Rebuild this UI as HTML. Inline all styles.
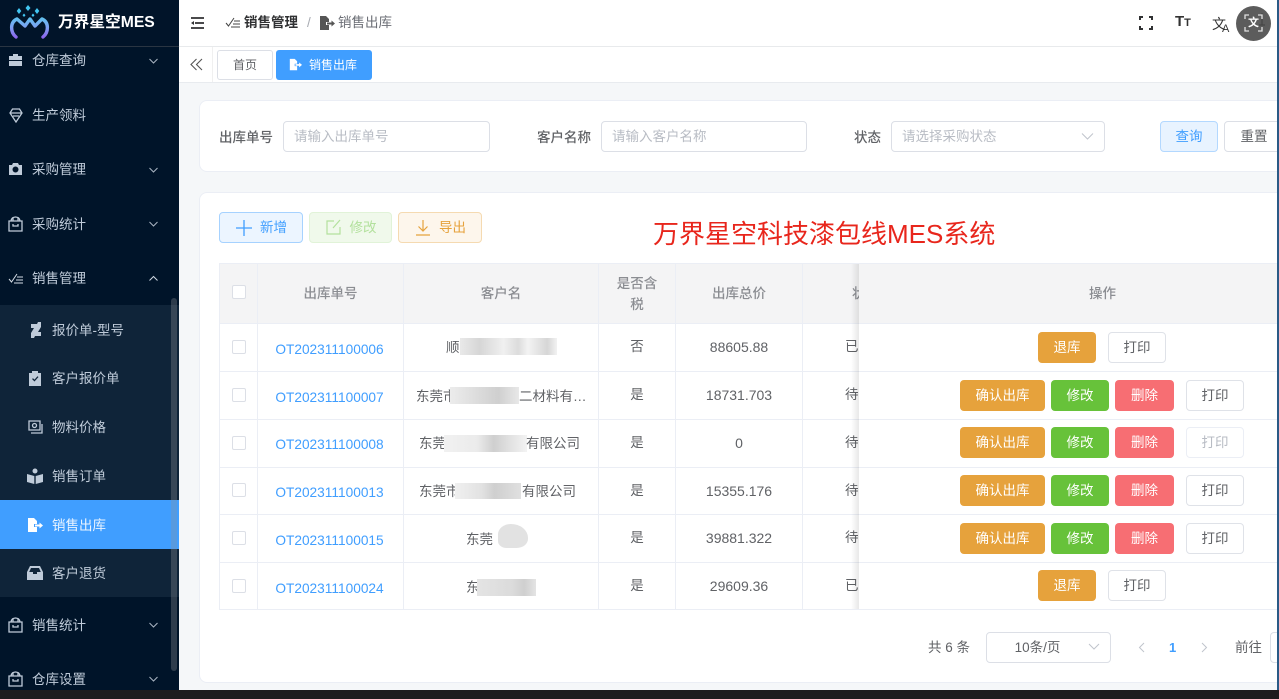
<!DOCTYPE html>
<html lang="zh-CN"><head><meta charset="utf-8"><title>销售出库</title>
<style>
html,body{margin:0;padding:0;width:1279px;height:699px;overflow:hidden;background:#f5f7f9;font-family:"Liberation Sans","Noto Sans CJK SC",sans-serif;font-size:13.5px;color:#606266}
div,span,svg{position:absolute;box-sizing:border-box}
.t{white-space:nowrap;line-height:22px}
.c{text-align:center}
.t.n{font-size:14px;line-height:20px}
.m{color:#bfcbd9;left:32px}
.s{color:#bfcbd9;left:52px}
.ch{left:149px;width:9px;height:9px}
.ico{fill:none;stroke:#bfcbd9;stroke-width:1.3}
.lb{color:#606266;font-weight:500}
.in{background:#fff;border:1px solid #dcdfe6;border-radius:4px;height:31px;top:121px;color:#b8bcc4;line-height:29px;padding-left:10px}
.btn{height:31px;border-radius:4px;text-align:center;line-height:29px;font-size:13.5px;color:#fff;border:1px solid transparent}
.o{background:#e6a23c}.g{background:#67c23a}.r{background:#f76e73}
.w{background:#fff;border-color:#dfe2e8;color:#606266}
.hl{background:#ebeef5}
.cb{left:232px;width:14px;height:14px;border:1px solid #dcdfe6;border-radius:2px;background:#fff}
.id{left:257px;width:145px;text-align:center;color:#409eff;font-weight:500;font-size:13.7px}
.bl{background:#d9d9d9;height:17px}
</style></head><body>

<!-- main chrome -->
<div style="left:179px;top:0;width:1100px;height:47px;background:#fff;border-bottom:1px solid #e8eaec"></div>
<div style="left:179px;top:47px;width:1100px;height:36px;background:#fff;border-bottom:1px solid #e8ebef"></div>
<div style="left:212px;top:47px;width:1px;height:35px;background:#f0f0f0"></div>

<svg style="left:191px;top:17px" width="14" height="12" viewBox="0 0 14 12"><path d="M0 1h13M4 6h9M0 11h13" stroke="#303133" stroke-width="1.800" fill="none"/><path d="M0 6l3-2v4z" fill="#303133"/></svg>
<svg style="left:225px;top:16px" width="16" height="13" viewBox="0 0 16 13" fill="none" stroke="#444" stroke-width="1"><path d="M1 7l2.500 3L9 2M9 5h6M8 8h7M6 11h9"/></svg>
<div class="t" style="left:244px;top:12px;color:#303133;font-weight:700;font-size:13.500px">销售管理</div>
<div class="t" style="left:307px;top:12px;color:#a8abb2">/</div>
<svg style="left:319px;top:15px" width="16" height="16" viewBox="0 0 16 16"><path d="M1 1h6l3 3v3H7v3h3v5H1z" fill="#555"/><path d="M8 7.500h4.500V5.500L16 8.500l-3.500 3V9.500H8z" fill="#555"/></svg>
<div class="t" style="left:338px;top:12px;color:#6b6e75;font-size:13.500px">销售出库</div>

<!-- top right icons -->
<svg style="left:1139px;top:16px" width="14" height="14" viewBox="0 0 14 14" fill="none" stroke="#303133" stroke-width="2"><path d="M1 4V1h3M10 1h3v3M13 10v3h-3M4 13H1v-3"/></svg>
<div class="t" style="left:1175px;top:11px;color:#333;font-weight:700;font-size:15px">T<span style="position:static;font-size:11px">T</span></div>
<div class="t" style="left:1212px;top:13px;color:#333;font-size:14px">文</div>
<div class="t" style="left:1222px;top:18px;color:#333;font-size:11px">A</div>
<svg style="left:1258px;top:12px" width="8" height="16" viewBox="0 0 8 16" fill="none" stroke="#222"><path d="M4 1v12M1 13h6"/></svg>
<div style="left:1236px;top:6px;width:35px;height:35px;border-radius:50%;background:rgba(70,70,70,.88)"></div>
<svg style="left:1244px;top:14px" width="19" height="18" viewBox="0 0 19 18" fill="none" stroke="#e0e0e0" stroke-width="1.300"><path d="M1 5V1h4M14 1h4v4M18 13v4h-4M5 17H1v-4"/></svg>
<div class="t" style="left:1248px;top:12px;color:#fff;font-size:11px;font-weight:700">文</div>

<!-- tags -->
<svg style="left:190px;top:58px" width="13" height="13" viewBox="0 0 13 13" fill="none" stroke="#555" stroke-width="1.100"><path d="M6.500 1L1 6.500 6.500 12M12 1L6.500 6.500 12 12"/></svg>
<div style="left:217px;top:50px;width:56px;height:30px;background:#fff;border:1px solid #dcdfe6;border-radius:3px;text-align:center;line-height:28px;font-size:12px;color:#606266">首页</div>
<div style="left:276px;top:50px;width:96px;height:30px;background:#409eff;border-radius:3px;line-height:30px;font-size:12px;color:#fff;padding-left:33px">销售出库</div>
<svg style="left:289px;top:58px" width="13" height="13" viewBox="0 0 16 16"><path d="M1 1h6l3 3v3H7v3h3v5H1z" fill="#fff"/><path d="M8 7.500h4.500V5.500L16 8.500l-3.500 3V9.500H8z" fill="#fff"/></svg>

<!-- search card -->
<div style="left:199px;top:100px;width:1100px;height:72px;background:#fff;border:1px solid #ebeef5;border-radius:8px"></div>
<div class="t lb" style="left:219px;top:127px">出库单号</div>
<div class="in" style="left:283px;width:207px">请输入出库单号</div>
<div class="t lb" style="left:537px;top:127px">客户名称</div>
<div class="in" style="left:601px;width:206px">请输入客户名称</div>
<div class="t lb" style="left:854px;top:127px">状态</div>
<div class="in" style="left:891px;width:214px">请选择采购状态</div>
<svg style="left:1081px;top:132px" width="13" height="9" viewBox="0 0 13 9" fill="none" stroke="#c0c4cc" stroke-width="1"><path d="M1 1.500l5.500 5.500L12 1.500"/></svg>
<div class="btn" style="left:1160px;top:121px;width:58px;background:#e8f3ff;border-color:#b3d8ff;color:#409eff">查询</div>
<div class="btn" style="left:1224px;top:121px;width:60px;background:#fff;border-color:#dcdfe6;color:#606266">重置</div>

<!-- table card -->
<div style="left:199px;top:192px;width:1100px;height:491px;background:#fff;border:1px solid #ebeef5;border-radius:8px"></div>
<div class="btn" style="left:219px;top:212px;width:84px;background:#ecf5ff;border-color:#a6d2ff;color:#409eff;padding-left:25px">新增</div>
<svg style="left:236px;top:220px" width="16" height="16" viewBox="0 0 16 16" stroke="#409eff" stroke-width="1.300"><path d="M8 0v16M0 8h16"/></svg>
<div class="btn" style="left:309px;top:212px;width:83px;background:#f0f9eb;border-color:#e1f3d8;color:#b3e19d;padding-left:25px">修改</div>
<svg style="left:326px;top:219px" width="16" height="16" viewBox="0 0 16 16" fill="none" stroke="#b3e19d" stroke-width="1.200"><path d="M8 2H1v13h13V8M7 9l7-8"/></svg>
<div class="btn" style="left:398px;top:212px;width:84px;background:#fdf6ec;border-color:#f5dab1;color:#e6a23c;padding-left:25px">导出</div>
<svg style="left:415px;top:220px" width="16" height="16" viewBox="0 0 16 16" fill="none" stroke="#e6a23c" stroke-width="1.200"><path d="M8 0v11M3.500 6.500L8 11l4.500-4.500M1 15h14"/></svg>
<div class="t" style="left:653px;top:216px;line-height:36px;font-size:26px;color:#e8261c">万界星空科技漆包线MES系统</div>

<!-- table -->
<div style="left:219px;top:263px;width:1060px;height:60px;background:#f4f4f5"></div>
<div class="hl" style="left:219px;top:263px;width:1060px;height:1px"></div>
<div class="hl" style="left:219px;top:323px;width:1060px;height:1px"></div>
<div class="hl" style="left:219px;top:371px;width:1060px;height:1px"></div>
<div class="hl" style="left:219px;top:419px;width:1060px;height:1px"></div>
<div class="hl" style="left:219px;top:467px;width:1060px;height:1px"></div>
<div class="hl" style="left:219px;top:514px;width:1060px;height:1px"></div>
<div class="hl" style="left:219px;top:562px;width:1060px;height:1px"></div>
<div class="hl" style="left:219px;top:609px;width:1060px;height:1px"></div>
<div class="hl" style="left:219px;top:263px;width:1px;height:347px"></div>
<div class="hl" style="left:257px;top:263px;width:1px;height:347px"></div>
<div class="hl" style="left:403px;top:263px;width:1px;height:347px"></div>
<div class="hl" style="left:598px;top:263px;width:1px;height:347px"></div>
<div class="hl" style="left:675px;top:263px;width:1px;height:347px"></div>
<div class="hl" style="left:802px;top:263px;width:1px;height:347px"></div>

<div class="cb" style="top:285px"></div><div class="cb" style="top:340px"></div><div class="cb" style="top:388px"></div><div class="cb" style="top:436px"></div><div class="cb" style="top:483px"></div><div class="cb" style="top:531px"></div><div class="cb" style="top:579px"></div>

<div class="t c" style="left:258px;width:145px;top:283px;color:#8b8d92;font-weight:500">出库单号</div>
<div class="t c" style="left:404px;width:194px;top:283px;color:#8b8d92;font-weight:500">客户名</div>
<div class="t c" style="left:599px;width:76px;top:273px;color:#8b8d92;font-weight:500">是否含</div>
<div class="t c" style="left:599px;width:76px;top:294px;color:#8b8d92;font-weight:500">税</div>
<div class="t c" style="left:676px;width:126px;top:283px;color:#8b8d92;font-weight:500">出库总价</div>
<div class="t" style="left:852px;top:283px;color:#8b8d92;font-weight:500">状</div>

<div class="t id" style="top:339px">OT202311100006</div>
<div class="t id" style="top:387px">OT202311100007</div>
<div class="t id" style="top:434px">OT202311100008</div>
<div class="t id" style="top:482px">OT202311100013</div>
<div class="t id" style="top:530px">OT202311100015</div>
<div class="t id" style="top:578px">OT202311100024</div>

<div class="t" style="left:446px;top:337px">顺</div>
<div class="bl" style="left:460px;top:338px;width:97px;background:linear-gradient(90deg,#e9e9e9,#d6d6d6 20%,#f0f0f0 45%,#dcdcdc 60%,#f3f3f3 70%,#d6d6d6 90%,#f2f2f2)"></div>
<div class="t" style="left:416px;top:386px">东莞市</div>
<div class="bl" style="left:450px;top:387px;width:69px;background:linear-gradient(90deg,#ececec,#e0e0e0 30%,#cfcfcf 70%,#e8e8e8)"></div>
<div class="t" style="left:519px;top:386px">二材料有…</div>
<div class="t" style="left:419px;top:433px">东莞</div>
<div class="bl" style="left:444px;top:435px;width:83px;background:linear-gradient(90deg,#f1f1f1,#ebebeb 40%,#cfcfcf 60%,#e2e2e2 80%,#f3f3f3)"></div>
<div class="t" style="left:526px;top:433px">有限公司</div>
<div class="t" style="left:419px;top:481px">东莞市</div>
<div class="bl" style="left:455px;top:483px;width:66px;height:16px;background:linear-gradient(90deg,#f0f0f0,#e2e2e2 40%,#cfcfcf 60%,#e0e0e0)"></div>
<div class="t" style="left:522px;top:481px">有限公司</div>
<div class="t" style="left:466px;top:529px">东莞</div>
<div style="left:498px;top:524px;width:30px;height:24px;background:#e2e2e2;border-radius:45% 60% 40% 30%"></div>
<div class="t" style="left:466px;top:577px">东</div>
<div class="bl" style="left:477px;top:579px;width:59px;background:linear-gradient(90deg,#e4e4e4,#dbdbdb 60%,#cfcfcf 80%,#e4e4e4)"></div>

<div class="t c" style="left:599px;width:76px;top:336px">否</div>
<div class="t c" style="left:599px;width:76px;top:384px">是</div>
<div class="t c" style="left:599px;width:76px;top:432px">是</div>
<div class="t c" style="left:599px;width:76px;top:480px">是</div>
<div class="t c" style="left:599px;width:76px;top:527px">是</div>
<div class="t c" style="left:599px;width:76px;top:575px">是</div>

<div class="t c n" style="left:676px;width:126px;top:337px">88605.88</div>
<div class="t c n" style="left:676px;width:126px;top:385px">18731.703</div>
<div class="t c n" style="left:676px;width:126px;top:433px">0</div>
<div class="t c n" style="left:676px;width:126px;top:481px">15355.176</div>
<div class="t c n" style="left:676px;width:126px;top:528px">39881.322</div>
<div class="t c n" style="left:676px;width:126px;top:576px">29609.36</div>

<div class="t" style="left:845px;top:336px">已</div>
<div class="t" style="left:845px;top:384px">待</div>
<div class="t" style="left:845px;top:432px">待</div>
<div class="t" style="left:845px;top:480px">待</div>
<div class="t" style="left:845px;top:527px">待</div>
<div class="t" style="left:845px;top:575px">已</div>

<!-- fixed column -->
<div style="left:851px;top:264px;width:8px;height:345px;background:linear-gradient(90deg,rgba(0,0,0,0),rgba(0,0,0,.09))"></div>
<div style="left:859px;top:264px;width:420px;height:345px;background:#fff"></div>
<div style="left:859px;top:264px;width:420px;height:59px;background:#f4f4f5"></div>
<div class="hl" style="left:859px;top:323px;width:420px;height:1px"></div>
<div class="hl" style="left:859px;top:371px;width:420px;height:1px"></div>
<div class="hl" style="left:859px;top:419px;width:420px;height:1px"></div>
<div class="hl" style="left:859px;top:467px;width:420px;height:1px"></div>
<div class="hl" style="left:859px;top:514px;width:420px;height:1px"></div>
<div class="hl" style="left:859px;top:562px;width:420px;height:1px"></div>
<div class="t" style="left:1089px;top:283px;color:#8b8d92;font-weight:500">操作</div>

<div class="btn o" style="left:1038px;top:332px;width:58px">退库</div>
<div class="btn w" style="left:1108px;top:332px;width:58px">打印</div>

<div class="btn o" style="left:960px;top:380px;width:85px">确认出库</div>
<div class="btn g" style="left:1051px;top:380px;width:58px">修改</div>
<div class="btn r" style="left:1115px;top:380px;width:59px">删除</div>
<div class="btn w" style="left:1186px;top:380px;width:58px">打印</div>

<div class="btn o" style="left:960px;top:427px;width:85px">确认出库</div>
<div class="btn g" style="left:1051px;top:427px;width:58px">修改</div>
<div class="btn r" style="left:1115px;top:427px;width:59px">删除</div>
<div class="btn w" style="left:1186px;top:427px;width:58px;border-color:#ebeef5;color:#b8bcc4">打印</div>

<div class="btn o" style="left:960px;top:475px;width:85px">确认出库</div>
<div class="btn g" style="left:1051px;top:475px;width:58px">修改</div>
<div class="btn r" style="left:1115px;top:475px;width:59px">删除</div>
<div class="btn w" style="left:1186px;top:475px;width:58px">打印</div>

<div class="btn o" style="left:960px;top:523px;width:85px">确认出库</div>
<div class="btn g" style="left:1051px;top:523px;width:58px">修改</div>
<div class="btn r" style="left:1115px;top:523px;width:59px">删除</div>
<div class="btn w" style="left:1186px;top:523px;width:58px">打印</div>

<div class="btn o" style="left:1038px;top:570px;width:58px">退库</div>
<div class="btn w" style="left:1108px;top:570px;width:58px">打印</div>

<!-- pagination -->
<div class="t" style="left:928px;top:637px">共 6 条</div>
<div class="btn" style="left:986px;top:632px;width:125px;background:#fff;border-color:#dcdfe6;color:#606266;padding-right:31px;text-align:center;padding-left:9px">10条/页</div>
<svg style="left:1088px;top:643px" width="12" height="8" viewBox="0 0 12 8" fill="none" stroke="#c0c4cc"><path d="M1 1l5 5 5-5"/></svg>
<svg style="left:1138px;top:642px" width="7" height="11" viewBox="0 0 7 11" fill="none" stroke="#c0c4cc"><path d="M6 1L1.500 5.500 6 10"/></svg>
<div class="t" style="left:1169px;top:637px;color:#409eff;font-weight:700;font-size:13px">1</div>
<svg style="left:1201px;top:642px" width="7" height="11" viewBox="0 0 7 11" fill="none" stroke="#c0c4cc"><path d="M1 1l4.500 4.500L1 10"/></svg>
<div class="t" style="left:1235px;top:637px">前往</div>
<div style="left:1270px;top:632px;width:30px;height:31px;background:#fff;border:1px solid #dcdfe6;border-radius:4px"></div>

<!-- sidebar -->
<div style="left:0;top:0;width:179px;height:690px;background:#001429"></div>
<div style="left:0;top:305px;width:179px;height:292px;background:#0f2439"></div>
<div style="left:0;top:500px;width:179px;height:49px;background:#409eff"></div>

<div class="t m" style="top:50px">仓库查询</div>
<div class="t m" style="top:105px">生产领料</div>
<div class="t m" style="top:159px">采购管理</div>
<div class="t m" style="top:214px">采购统计</div>
<div class="t m" style="top:268px">销售管理</div>
<div class="t m" style="top:615px">销售统计</div>
<div class="t m" style="top:669px">仓库设置</div>
<div class="t s" style="top:320px">报价单-型号</div>
<div class="t s" style="top:368px">客户报价单</div>
<div class="t s" style="top:417px">物料价格</div>
<div class="t s" style="top:466px">销售订单</div>
<div class="t s" style="top:515px;color:#eaf4ff">销售出库</div>
<div class="t s" style="top:563px">客户退货</div>

<!-- chevrons -->
<svg class="ch" style="top:56px" viewBox="0 0 9 9" fill="none" stroke="#aab6c3"><path d="M.500 3l4 4 4-4"/></svg>
<svg class="ch" style="top:165px" viewBox="0 0 9 9" fill="none" stroke="#aab6c3"><path d="M.500 3l4 4 4-4"/></svg>
<svg class="ch" style="top:219px" viewBox="0 0 9 9" fill="none" stroke="#aab6c3"><path d="M.500 3l4 4 4-4"/></svg>
<svg class="ch" style="top:274px" viewBox="0 0 9 9" fill="none" stroke="#cfd8e2"><path d="M.500 6.500l4-4 4 4"/></svg>
<svg class="ch" style="top:620px" viewBox="0 0 9 9" fill="none" stroke="#aab6c3"><path d="M.500 3l4 4 4-4"/></svg>
<svg class="ch" style="top:674px" viewBox="0 0 9 9" fill="none" stroke="#aab6c3"><path d="M.500 3l4 4 4-4"/></svg>

<!-- menu icons -->
<svg style="left:9px;top:53px" width="13" height="14" viewBox="0 0 13 14"><path d="M4 3V1h5v2h4v4H0V3zM0 8h13v5H0z" fill="#bfcbd9"/></svg>
<svg style="left:9px;top:108px" width="14" height="15" viewBox="0 0 14 15" class="ico"><path d="M3.500 1h7L13 5l-6 9-6-9zM1 5h12M4 8h6"/></svg>
<svg style="left:9px;top:163px" width="13" height="12" viewBox="0 0 13 12"><path fill-rule="evenodd" d="M0 2h3l1-2h5l1 2h3v10H0zM6.500 3.500a3 3 0 100 6 3 3 0 000-6z" fill="#bfcbd9"/></svg>
<svg style="left:8px;top:216px" width="15" height="16" viewBox="0 0 15 16" class="ico"><path d="M1 5h13v10H1zM3 5a4.500 4 0 019 0M5 1v4M10 1v4M5 8v2h5V8"/></svg>
<svg style="left:8px;top:272px" width="16" height="12" viewBox="0 0 16 12" fill="none" stroke="#d5dde6"><path d="M1 7l2.500 3L9 2M9 5h6M8 8h7M6 11h9"/></svg>
<svg style="left:8px;top:617px" width="15" height="16" viewBox="0 0 15 16" class="ico"><path d="M1 5h13v10H1zM3 5a4.500 4 0 019 0M5 1v4M10 1v4M5 8v2h5V8"/></svg>
<svg style="left:8px;top:671px" width="15" height="16" viewBox="0 0 15 16" class="ico"><path d="M1 5h13v10H1zM3 5a4.500 4 0 019 0M5 1v4M10 1v4M5 8v2h5V8"/></svg>

<svg style="left:30px;top:322px" width="11" height="16" viewBox="0 0 11 16"><path d="M11 0H8L7 2H1v4h3L1 11v5h3l1-2h6v-4H8l3-5z" fill="#bfcbd9"/></svg>
<svg style="left:29px;top:371px" width="12" height="15" viewBox="0 0 12 15"><path fill-rule="evenodd" d="M0 2h3V0h6v2h3v13H0zM3 8l2.500 2.500L9.500 6l-1-.7-3 3.300L4 7.200z" fill="#bfcbd9"/></svg>
<svg style="left:28px;top:420px" width="15" height="14" viewBox="0 0 15 14" class="ico"><path d="M1 1h11v9H1zM14 4v9H3"/><circle cx="6.500" cy="5.500" r="2"/></svg>
<svg style="left:27px;top:468px" width="16" height="16" viewBox="0 0 16 16"><circle cx="8" cy="3" r="2.500" fill="#bfcbd9"/><path d="M0 6l7.300 2v8L0 14zM16 6L8.700 8v8l7.300-2z" fill="#bfcbd9"/></svg>
<svg style="left:27px;top:517px" width="16" height="16" viewBox="0 0 16 16"><path d="M1 1h6l3 3v3H7v3h3v5H1z" fill="#fff"/><path d="M8 7.500h4.500V5.500L16 8.500l-3.500 3V9.500H8z" fill="#fff"/></svg>
<svg style="left:27px;top:566px" width="16" height="14" viewBox="0 0 16 14"><path fill-rule="evenodd" d="M3 0h10l3 6v8H0V6zM4 2L2.200 6H6v2h4V6h3.800L12 2z" fill="#bfcbd9"/></svg>

<!-- scrollbar -->
<div style="left:171px;top:298px;width:6px;height:373px;border-radius:3px;background:rgba(144,147,153,.32)"></div>

<!-- header brand -->
<div style="left:0;top:0;width:179px;height:47px;background:#011429;border-bottom:1px solid #2a3542"></div>
<svg style="left:0;top:0" width="56" height="46" viewBox="0 0 56 46" fill="none">
<defs><linearGradient id="lg" gradientUnits="userSpaceOnUse" x1="0" y1="16" x2="0" y2="38"><stop offset="0" stop-color="#5cc8ee"/><stop offset=".55" stop-color="#7f9cf2"/><stop offset="1" stop-color="#8c62ee"/></linearGradient></defs>
<path d="M16 37C10 32 10 22 17 19l8 7 5-7 5 7 7-7c7 3 7 13 1 18" stroke="url(#lg)" stroke-width="3.400" stroke-linecap="round" stroke-linejoin="round"/>
<path d="M19 8l2.300 3L19 14l-2.300-3zM28 5l2.500 3L28 11l-2.500-3zM37 8l2.300 3L37 14l-2.300-3zM24 13.500l1.500 1.800L24 17l-1.500-1.700zM33 13.500l1.500 1.800L33 17l-1.500-1.700z" fill="#42c6f2"/>
</svg>
<div class="t" style="left:58px;top:12px;color:#fff;font-weight:700;font-size:15.700px">万界星空MES</div>

<!-- bottom bar & right edge -->
<div style="left:0;top:690px;width:1279px;height:9px;background:#1c1c1e"></div>
<div style="left:1277px;top:0;width:2px;height:690px;background:#2a5a86"></div>
</body></html>
